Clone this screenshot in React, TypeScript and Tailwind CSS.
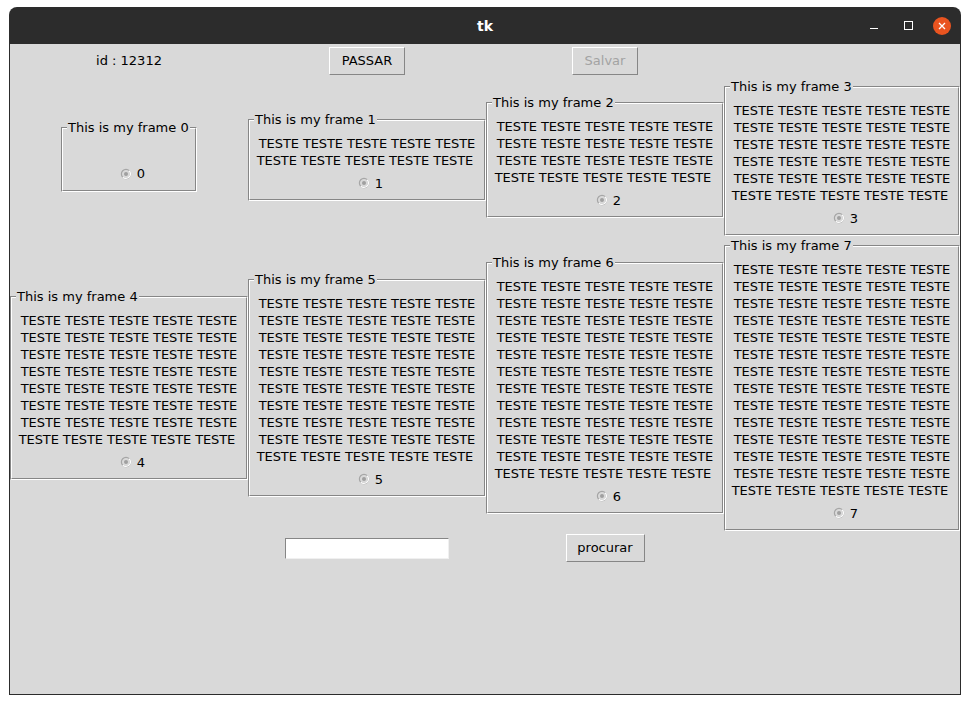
import React from "react";

const font = { fontFamily: '"DejaVu Sans", Verdana, sans-serif' };

const LINE = "TESTE TESTE TESTE TESTE TESTE";

function Radio({ n }: { n: number }) {
  return (
    <div className="mt-[3px] flex h-[22px] items-center justify-center gap-[5px] pl-[7px]">
      <svg width="12" height="12" viewBox="0 0 12 12">
        <circle cx="6" cy="6" r="4.6" fill="#d9d9d9" stroke="#a6a6a6" strokeWidth="1.2" />
        <path d="M2.75 9.25 A4.6 4.6 0 0 0 9.25 2.75" stroke="#ffffff" strokeWidth="1.2" fill="none" />
        <circle cx="6" cy="6" r="2" fill="#a0a0a0" />
      </svg>
      <span className="text-[13px] leading-[17px] text-black">{n}</span>
    </div>
  );
}

function Frame({ i, width, shift = "" }: { i: number; width: string; shift?: string }) {
  const lines = i === 0 ? [] : Array.from({ length: i * 2 }, (_, k) => k);
  return (
    <div className={`relative ${width} ${shift}`}>
      <div className="mt-[8px] border border-t-[#868686] border-l-[#868686] border-b-white border-r-white">
        <div className="border border-t-white border-l-white border-b-[#868686] border-r-[#868686] pt-[14px] pb-[5px]">
          {i === 0 ? (
            <div className="h-[17px]" />
          ) : (
            lines.map((k) => (
              <div
                key={k}
                className="whitespace-pre text-center text-[13px] leading-[17px] tracking-[-0.1px] text-black"
              >
                {k === lines.length - 1 ? LINE + " " : LINE}
              </div>
            ))
          )}
          <Radio n={i} />
        </div>
      </div>
      <span className="absolute left-[6px] top-0 bg-[#d9d9d9] px-[1px] text-[13px] leading-[17px] text-black">
        This is my frame {i}
      </span>
    </div>
  );
}

function TkButton({ label, disabled, w }: { label: string; disabled?: boolean; w: string }) {
  return (
    <div
      className={`flex h-[28px] ${w} items-center justify-center border border-t-white border-l-white border-b-[#868686] border-r-[#868686] text-[13px] ${
        disabled ? "text-[#a3a3a3]" : "text-black"
      }`}
    >
      {label}
    </div>
  );
}

export default function App() {
  const cols = "grid grid-cols-[238px_238px_238px_236px] items-center justify-items-center";
  return (
    <div className="min-h-[705px] w-[970px] bg-white pt-[7px]" style={font}>
      <div className="ml-[9px] w-[952px]">
        {/* title bar */}
        <div className="grid h-[37px] grid-cols-[1fr_auto_1fr] items-center rounded-t-[8px] bg-[#2c2c2c]">
          <div />
          <div className="pt-[2px] text-[14px] font-bold text-white">tk</div>
          <div className="flex items-center justify-end pr-[10px]">
            <div className="mt-[6px] h-[1px] w-[8px] bg-white" />
            <div className="ml-[26px] h-[9px] w-[9px] border border-white" />
            <div className="ml-[20px] flex h-[18px] w-[18px] items-center justify-center rounded-full bg-[#e95420]">
              <svg width="8" height="8" viewBox="0 0 8 8">
                <path d="M1 1 L7 7 M7 1 L1 7" stroke="#ffffff" strokeWidth="1.3" />
              </svg>
            </div>
          </div>
        </div>
        {/* body */}
        <div className="h-[651px] overflow-hidden border-x border-b border-[#2c2c2c] bg-[#d9d9d9]">
          <div className={`${cols} h-[34px]`}>
            <div className="text-[13px] text-black">id : 12312</div>
            <TkButton label="PASSAR" w="w-[76px]" />
            <TkButton label="Salvar" disabled w="w-[66px]" />
            <div />
          </div>
          <div className={cols}>
            <Frame i={0} width="w-[136px]" shift="mb-[4px]" />
            <Frame i={1} width="w-full" shift="mb-[2px]" />
            <Frame i={2} width="w-full" shift="mb-[2px]" />
            <Frame i={3} width="w-full" />
          </div>
          <div className={`${cols} mt-[1px]`}>
            <Frame i={4} width="w-full" />
            <Frame i={5} width="w-full" />
            <Frame i={6} width="w-full" />
            <Frame i={7} width="w-full" />
          </div>
          <div className={`${cols} h-[34px]`}>
            <div />
            <div className="h-[21px] w-[164px] border border-t-[#868686] border-l-[#868686] border-b-[#f0f0f0] border-r-[#f0f0f0] bg-white" />
            <TkButton label="procurar" w="w-[79px]" />
            <div />
          </div>
        </div>
      </div>
    </div>
  );
}
